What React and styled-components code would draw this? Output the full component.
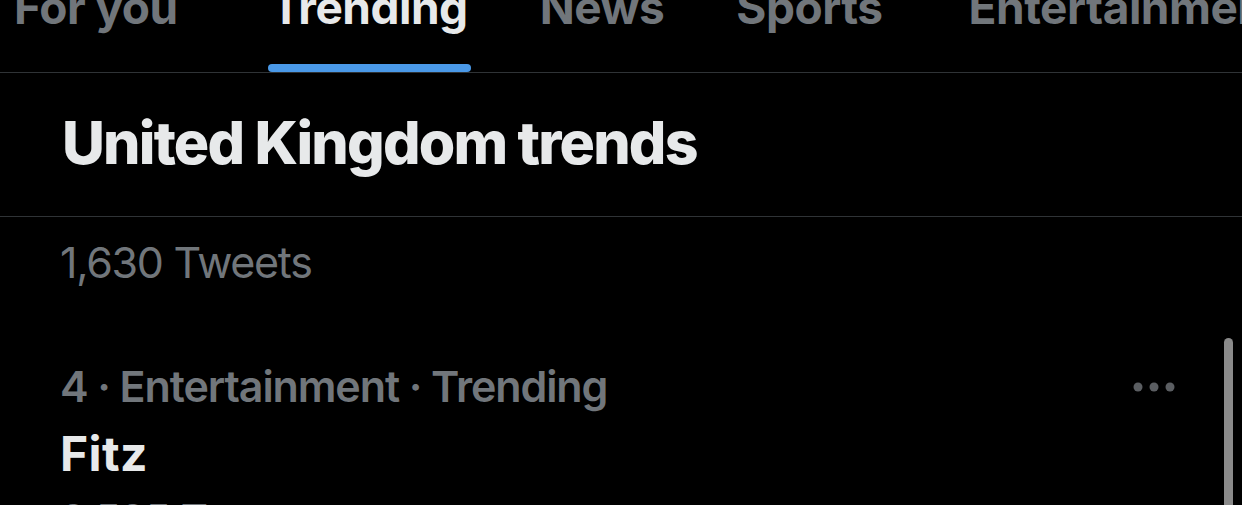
import styled, { createGlobalStyle } from "styled-components";

const GlobalStyle = createGlobalStyle`
  html, body {
    margin: 0;
    padding: 0;
    background: #000;
    overflow: hidden;
  }
  body {
    font-family: Inter, "Noto Sans", "Liberation Sans", sans-serif;
    -webkit-font-smoothing: antialiased;
  }
`;

const Screen = styled.div`
  position: relative;
  width: 1242px;
  height: 505px;
  overflow: hidden;
  background: #000;
  color: #e7e9ea;
`;

const TabBar = styled.nav`
  display: flex;
  margin-top: -15px;
  padding-left: 14px;
  gap: 72px;
  border-bottom: 1px solid #2f3336;
  white-space: nowrap;
`;

const Tab = styled.div`
  display: flex;
  flex-direction: column;
  align-items: center;
  flex-shrink: 0;
  margin-right: ${(p) => p.$extra || 0}px;
`;

const TabLabel = styled.span`
  font-size: 46px;
  line-height: 45px;
  font-weight: 700;
  letter-spacing: -0.5px;
  color: ${(p) => (p.$active ? "#e7e9ea" : "#71767b")};
`;

const TabIndicator = styled.span`
  display: block;
  margin-top: 34px;
  height: 8px;
  width: calc(100% + 6px);
  border-radius: 4px;
  background: ${(p) => (p.$active ? "#4a99e8" : "transparent")};
`;

const Header = styled.header`
  padding: 34px 62px 37px;
  border-bottom: 1px solid #2f3336;
`;

const Title = styled.h1`
  margin: 0;
  font-size: 59px;
  line-height: 72px;
  font-weight: 800;
  letter-spacing: -1.8px;
  color: #e7e9ea;
`;

const Count = styled.div`
  padding: 18px 60px 0;
  font-size: 43px;
  line-height: 54px;
  font-weight: 400;
  letter-spacing: -1.3px;
  color: #71767b;
`;

const TrendRow = styled.div`
  display: flex;
  align-items: flex-start;
  justify-content: space-between;
  padding: 70px 67px 0 60px;
`;

const TrendBody = styled.div`
  display: flex;
  flex-direction: column;
`;

const Meta = styled.div`
  font-size: 43px;
  line-height: 54px;
  font-weight: 600;
  letter-spacing: -1.1px;
  color: #71767b;
`;

const TrendName = styled.div`
  margin-top: 13px;
  font-size: 48px;
  line-height: 56px;
  font-weight: 700;
  letter-spacing: 0.4px;
  color: #e7e9ea;
`;

const TrendCount = styled(Meta)`
  margin-top: 10px;
  font-weight: 400;
  letter-spacing: -1.3px;
`;

const MoreButton = styled.button`
  display: flex;
  align-items: center;
  padding: 0;
  margin-top: 23px;
  border: 0;
  background: none;
  color: #5b5e62;
`;

const ScrollThumb = styled.div`
  position: absolute;
  left: 1224px;
  top: 338px;
  width: 9px;
  height: 200px;
  border-radius: 5px;
  background: #8a8a8a;
`;

const tabs = [
  { label: "For you", extra: 21 },
  { label: "Trending", active: true },
  { label: "News" },
  { label: "Sports", extra: 14 },
  { label: "Entertainment" },
];

function Dots() {
  return (
    <svg width="42" height="10" viewBox="0 0 42 10" fill="currentColor">
      <circle cx="5" cy="5" r="4.5" />
      <circle cx="21" cy="5" r="4.5" />
      <circle cx="37" cy="5" r="4.5" />
    </svg>
  );
}

export default function App() {
  return (
    <Screen>
      <GlobalStyle />
      <TabBar>
        {tabs.map((t) => (
          <Tab key={t.label} $extra={t.extra}>
            <TabLabel $active={t.active}>{t.label}</TabLabel>
            <TabIndicator $active={t.active} />
          </Tab>
        ))}
      </TabBar>
      <Header>
        <Title>United Kingdom trends</Title>
      </Header>
      <Count>1,630 Tweets</Count>
      <TrendRow>
        <TrendBody>
          <Meta>4 · Entertainment · Trending</Meta>
          <TrendName>Fitz</TrendName>
          <TrendCount>3,535 Tweets</TrendCount>
        </TrendBody>
        <MoreButton aria-label="More">
          <Dots />
        </MoreButton>
      </TrendRow>
      <ScrollThumb />
    </Screen>
  );
}
